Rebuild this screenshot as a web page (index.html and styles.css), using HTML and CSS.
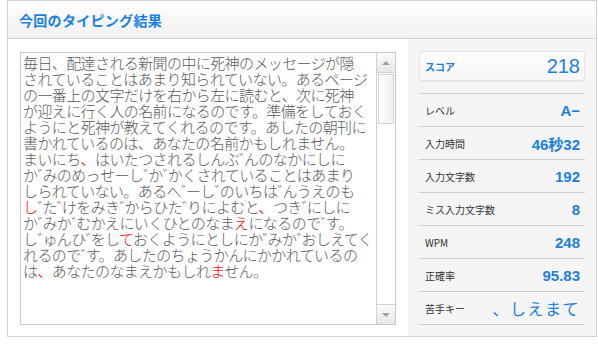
FILE: index.html
```html
<!DOCTYPE html>
<html lang="ja">
<head>
    <meta charset="UTF-8">
    <title>今回のタイピング結果</title>
    <link rel="stylesheet" href="styles.css">
</head>
<body>
    <div class="result-box">
        <div class="result-header">
            <h2>今回のタイピング結果</h2>
        </div>
        <div class="result-body">
            <div class="text-area-wrap">
                <div class="text-frame">
                    <div class="typed-text">
                        <div>毎日、配達される新聞の中に死神のメッセージが隠</div>
                        <div>されていることはあまり知られていない。あるページ</div>
                        <div>の一番上の文字だけを右から左に読むと、次に死神</div>
                        <div>が迎えに行く人の名前になるのです。準備をしておく</div>
                        <div>ようにと死神が教えてくれるのです。あしたの朝刊に</div>
                        <div>書かれているのは、あなたの名前かもしれません。</div>
                        <div>まいにち<span class="miss">、</span>はいたつされるしんぶ<span class="dk">゛</span>んのなかにしに</div>
                        <div>か<span class="dk">゛</span>みのめっせーし<span class="dk">゛</span>か<span class="dk">゛</span>かくされていることはあまり</div>
                        <div>しられていない。あるへ<span class="dk">゛</span>ーし<span class="dk">゛</span>のいちは<span class="dk">゛</span>んうえのも</div>
                        <div><span class="miss">し</span><span class="dk">゛</span>た<span class="dk">゛</span>けをみき<span class="dk">゛</span>からひた<span class="dk">゛</span>りによむと<span class="miss">、</span>つき<span class="dk">゛</span>にしに</div>
                        <div>か<span class="dk">゛</span>みか<span class="dk">゛</span>むかえにいくひとのなま<span class="miss">え</span>になるので<span class="dk">゛</span>す。</div>
                        <div>し<span class="dk">゛</span>ゅんひ<span class="dk">゛</span>をし<span class="miss">て</span>おくようにとしにか<span class="dk">゛</span>みか<span class="dk">゛</span>おしえてく</div>
                        <div>れるので<span class="dk">゛</span>す。あしたのちょうかんにかかれているの</div>
                        <div>は<span class="miss">、</span>あなたのなまえかもしれ<span class="miss">ま</span>せん。</div>
                    </div>
                    <div class="scrollbar">
                        <div class="scroll-btn"><span class="arrow-up"></span></div>
                        <div class="scroll-thumb"></div>
                        <div class="scroll-track"></div>
                        <div class="scroll-btn"><span class="arrow-down"></span></div>
                    </div>
                </div>
            </div>
            <div class="stats-panel">
                <div class="score-card">
                    <span class="score-label">スコア</span>
                    <span class="score-value">218</span>
                </div>
                <ul class="stat-list">
                    <li><span class="stat-label">レベル</span><span class="stat-value">A&minus;</span></li>
                    <li><span class="stat-label">入力時間</span><span class="stat-value">46秒32</span></li>
                    <li><span class="stat-label">入力文字数</span><span class="stat-value">192</span></li>
                    <li><span class="stat-label">ミス入力文字数</span><span class="stat-value">8</span></li>
                    <li><span class="stat-label">WPM</span><span class="stat-value">248</span></li>
                    <li><span class="stat-label">正確率</span><span class="stat-value">95.83</span></li>
                    <li><span class="stat-label">苦手キー</span><span class="stat-value weak-keys">、しえまて</span></li>
                </ul>
            </div>
        </div>
    </div>
</body>
</html>
```

FILE: styles.css
```css
* {
    margin: 0;
    padding: 0;
    box-sizing: border-box;
}

body {
    font-family: "Liberation Sans", "Noto Sans CJK JP", sans-serif;
    background-color: #ffffff;
}

.result-box {
    margin-left: 7px;
    width: 590px;
    height: 337px;
    border: 1px solid #d2d2d2;
    display: flex;
    flex-direction: column;
}

/* Header */
.result-header {
    height: 38px;
    border-bottom: 1px solid #d2d2d2;
    background: linear-gradient(#ffffff, #f0f0f0);
    display: flex;
    align-items: center;
    padding-left: 11px;
}

.result-header h2 {
    font-family: "Noto Sans CJK JP", sans-serif;
    font-size: 14px;
    font-weight: bold;
    color: #1a80e0;
    letter-spacing: 0.3px;
}

.result-body {
    flex: 1;
    display: flex;
}

/* Typed text box */
.text-area-wrap {
    width: 400px;
    padding: 13px 12px 11px 12px;
}

.text-frame {
    height: 100%;
    border: 1px solid #c8c8c8;
    display: flex;
}

.typed-text {
    flex: 1;
    padding: 2px 0 0 2px;
    font-family: "Noto Sans CJK JP", sans-serif;
    font-weight: 300;
    font-size: 15px;
    line-height: 16px;
    letter-spacing: -0.6px;
    color: #5a5a5a;
    white-space: nowrap;
    overflow: hidden;
}

.typed-text .miss {
    color: #ee0000;
}

/* voiced marks typed as separate keys take only a third of a cell */
.typed-text .dk {
    letter-spacing: -10px;
}

/* Scrollbar */
.scrollbar {
    width: 19px;
    border-left: 1px solid #d0d0d0;
    display: flex;
    flex-direction: column;
    background-color: #ffffff;
}

.scroll-btn {
    height: 20px;
    background: linear-gradient(#fafafa, #e8e8e8);
    border-bottom: 1px solid #d0d0d0;
    display: flex;
    align-items: center;
    justify-content: center;
}

.scroll-btn:last-child {
    border-bottom: none;
    border-top: 1px solid #d0d0d0;
}

.arrow-up {
    border-left: 4px solid transparent;
    border-right: 4px solid transparent;
    border-bottom: 4px solid #a0a0a0;
}

.arrow-down {
    border-left: 4px solid transparent;
    border-right: 4px solid transparent;
    border-top: 4px solid #a0a0a0;
}

.scroll-thumb {
    height: 50px;
    margin: 1px 1px 0 1px;
    border: 1px solid #d4d4d4;
    background: linear-gradient(to right, #ffffff, #f0f0f0);
}

.scroll-track {
    flex: 1;
}

/* Stats panel */
.stats-panel {
    flex: 1;
    background-color: #f5f5f5;
    padding: 12px 11px 0 11px;
}

.score-card {
    height: 30px;
    border: 1px solid #e4e4e4;
    border-radius: 3px;
    background: linear-gradient(#ffffff, #f6f6f6);
    box-shadow: 0 1px 1px rgba(0, 0, 0, 0.04);
    display: flex;
    align-items: center;
    justify-content: space-between;
    padding: 0 4px 0 5px;
}

.score-label {
    font-family: "Noto Sans CJK JP", sans-serif;
    font-size: 10px;
    font-weight: bold;
    color: #1a80e0;
}

.score-value {
    font-size: 20px;
    color: #1a80e0;
}

.stat-list {
    list-style: none;
    margin-top: 12px;
    border-top: 1px solid #cfcfcf;
}

.stat-list li {
    height: 33px;
    border-bottom: 1px solid #cfcfcf;
    display: flex;
    align-items: center;
    justify-content: space-between;
    padding: 0 5px 0 6px;
}

.stat-label {
    font-family: "Noto Sans CJK JP", sans-serif;
    font-size: 10px;
    color: #333333;
}

.stat-value {
    font-size: 15px;
    font-weight: bold;
    color: #1a80e0;
}

.stat-value.weak-keys {
    font-family: "Noto Sans CJK JP", sans-serif;
    font-size: 16px;
    font-weight: normal;
    letter-spacing: 1.5px;
}
```
